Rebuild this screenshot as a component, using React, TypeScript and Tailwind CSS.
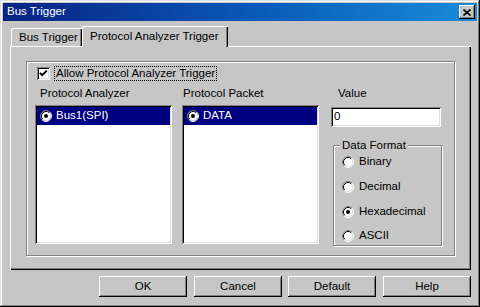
import React from 'react'

const raised =
  'shadow-[inset_-1px_-1px_0_#000,inset_1px_1px_0_#fff,inset_-2px_-2px_0_#808080]'
const sunken =
  'shadow-[inset_1px_1px_0_#808080,inset_-1px_-1px_0_#fff,inset_2px_2px_0_#000,inset_-2px_-2px_0_#dfdfdf]'

function Radio({ checked }: { checked?: boolean }) {
  return (
    <svg width="12" height="12" viewBox="0 0 12 12" className="shrink-0">
      <circle cx="6" cy="6" r="5" fill="#fff" />
      <path d="M2.11 9.89 A5.5 5.5 0 0 1 9.89 2.11" fill="none" stroke="#808080" />
      <path d="M9.89 2.11 A5.5 5.5 0 0 1 2.11 9.89" fill="none" stroke="#fff" />
      <path d="M2.82 9.18 A4.5 4.5 0 0 1 9.18 2.82" fill="none" stroke="#000" />
      <path d="M9.18 2.82 A4.5 4.5 0 0 1 2.82 9.18" fill="none" stroke="#dfdfdf" />
      {checked && <circle cx="6" cy="6" r="2" fill="#000" />}
    </svg>
  )
}

function Checkbox() {
  return (
    <div className={`w-[13px] h-[13px] bg-white shrink-0 ${sunken}`}>
      <svg width="13" height="13" viewBox="0 0 13 13">
        <path d="M3 6 L5.2 8.2 L9.8 3.6" fill="none" stroke="#000" strokeWidth="2" />
      </svg>
    </div>
  )
}

function ListBox({ item }: { item: string }) {
  return (
    <div className={`h-[139px] bg-white p-[2px] ${sunken}`}>
      <div className="h-[18px] bg-[#000080] flex items-center text-white">
        <span className="ml-[3px]">
          <Radio checked />
        </span>
        <span className="ml-[4px]">{item}</span>
      </div>
    </div>
  )
}

function RadioRow({ label, checked, mt }: { label: string; checked?: boolean; mt: string }) {
  return (
    <div className={`flex items-center h-[14px] ml-[8px] ${mt}`}>
      <Radio checked={checked} />
      <span className="ml-[5px]">{label}</span>
    </div>
  )
}

function Button({ label, ml }: { label: string; ml: string }) {
  return (
    <div className={`w-[88px] h-[21px] flex items-center justify-center ${ml} ${raised}`}>
      {label}
    </div>
  )
}

export default function App() {
  return (
    <div className="w-[480px] h-[307px] bg-[#c6c6c6] p-[3px] flex flex-col font-['Liberation_Sans',Arial,sans-serif] text-[11.5px] leading-none text-black shadow-[inset_-1px_-1px_0_#000,inset_1px_1px_0_#dfdfdf,inset_-2px_-2px_0_#808080,inset_2px_2px_0_#fff]">
      {/* タイトルバー */}
      <div className="h-[18px] flex items-center pl-[4px] pr-[2px] bg-linear-to-r from-[#0a2283] via-[#0a56b6] to-[#1a8cd8] text-white">
        <span>Bus Trigger</span>
        <div className={`ml-auto w-[16px] h-[14px] bg-[#c6c6c6] flex items-center justify-center ${raised}`}>
          <svg width="8" height="7" viewBox="0 0 8 7">
            <path d="M0.5 0.5 L7.5 6.5 M7.5 0.5 L0.5 6.5" stroke="#000" strokeWidth="1.6" />
          </svg>
        </div>
      </div>

      {/* タブ */}
      <div className="mt-[6px] ml-[7px] mr-[6px] flex flex-col">
        <div className="flex items-end h-[20px] relative z-10 -mb-px">
          <div className="ml-[1px] mb-px w-[71px] h-[18px] flex items-center pl-[8px] pt-[2px] rounded-tl-[2px] shadow-[inset_1px_1px_0_#fff,inset_-1px_0_0_#000,inset_-2px_0_0_#808080]">
            Bus Trigger
          </div>
          <div className="w-[146px] h-[21px] bg-[#c6c6c6] flex items-center pl-[8px] rounded-tl-[2px] shadow-[inset_1px_1px_0_#fff,inset_-1px_0_0_#000,inset_-2px_0_0_#808080]">
            Protocol Analyzer Trigger
          </div>
        </div>

        <div className="h-[224px] pt-[15px] pl-[16px] shadow-[inset_1px_1px_0_#fff,inset_-1px_-1px_0_#000,inset_-2px_-2px_0_#808080]">
          <div className="w-[429px] h-[195px] border border-[#808080] shadow-[inset_1px_1px_0_#fff,1px_1px_0_#fff]">
            <div className="flex items-center mt-[4px] ml-[10px] h-[15px]">
              <Checkbox />
              <div className="ml-[4px] h-[15px] px-[1px] pt-px flex items-center border border-dotted border-black">
                Allow Protocol Analyzer Trigger
              </div>
            </div>

            <div className="flex mt-[4px]">
              <div className="ml-[8px] w-[137px] flex flex-col">
                <div className="h-[14px] flex items-center pl-[5px] pt-[4px]">Protocol Analyzer</div>
                <div className="mt-[6px]">
                  <ListBox item="Bus1(SPI)" />
                </div>
              </div>
              <div className="ml-[10px] w-[137px] flex flex-col">
                <div className="h-[14px] flex items-center pl-[1px] pt-[4px]">Protocol Packet</div>
                <div className="mt-[6px]">
                  <ListBox item="DATA" />
                </div>
              </div>
              <div className="ml-[12px] w-[110px] flex flex-col">
                <div className="h-[14px] flex items-center pl-[7px] pt-[4px]">Value</div>
                <div className={`mt-[8px] h-[20px] bg-white flex items-center pl-[3px] ${sunken}`}>0</div>
                <div className="relative mt-[18px] ml-[2px] w-[109px] h-[101px] border border-[#808080] shadow-[inset_1px_1px_0_#fff,1px_1px_0_#fff] pt-[9px]">
                  <span className="absolute top-[-7px] left-[6px] px-[2px] bg-[#c6c6c6] leading-[13px]">
                    Data Format
                  </span>
                  <RadioRow label="Binary" mt="mt-0" />
                  <RadioRow label="Decimal" mt="mt-[11px]" />
                  <RadioRow label="Hexadecimal" checked mt="mt-[11px]" />
                  <RadioRow label="ASCII" mt="mt-[10px]" />
                </div>
              </div>
            </div>
          </div>
        </div>
      </div>

      {/* ボタン */}
      <div className="flex mt-[6px] ml-[96px]">
        <Button label="OK" ml="ml-0" />
        <Button label="Cancel" ml="ml-[7px]" />
        <Button label="Default" ml="ml-[6px]" />
        <Button label="Help" ml="ml-[7px]" />
      </div>
    </div>
  )
}
